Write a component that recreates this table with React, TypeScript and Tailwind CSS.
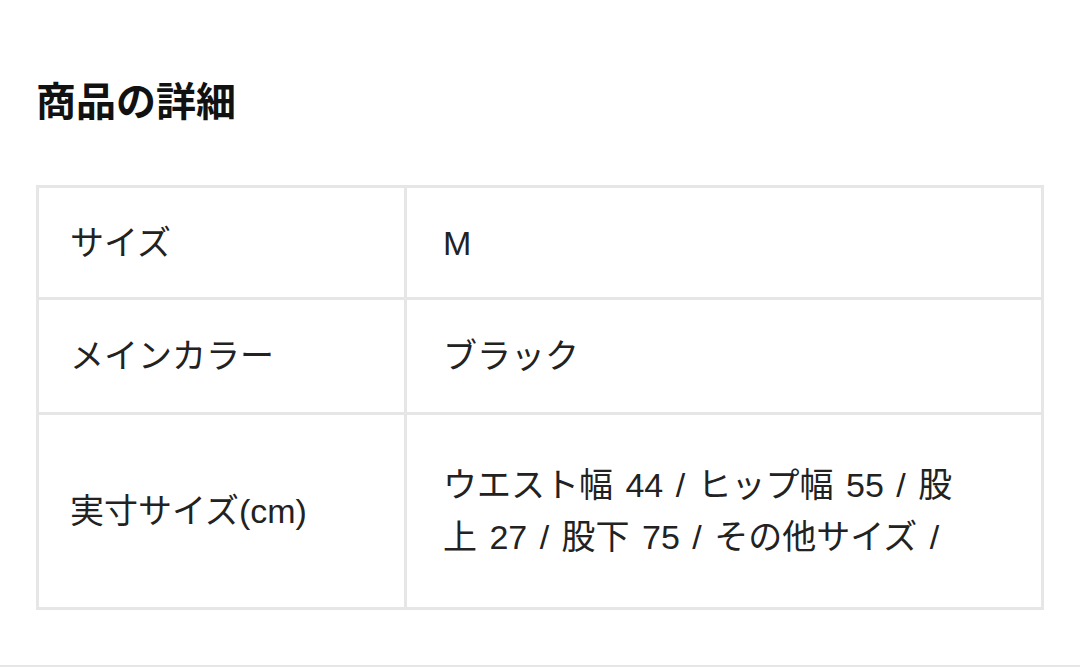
const rows = [
  { label: "サイズ", value: "M", h: "h-[109px]" },
  { label: "メインカラー", value: "ブラック", h: "h-[115px]" },
  {
    label: "実寸サイズ(cm)",
    value: "ウエスト幅 44 / ヒップ幅 55 / 股上 27 / 股下 75 / その他サイズ /",
    h: "h-[195px]",
  },
];

export default function App() {
  return (
    <div
      className="flex h-[667px] w-full flex-col bg-white text-[#222]"
      style={{ fontFamily: '"Liberation Sans", "Noto Sans CJK JP", sans-serif' }}
    >
      <div className="flex-1 px-[36px]">
        <h2
          className="mt-[76px] text-[40px] font-bold leading-[46px] text-[#111]"
          style={{ fontFamily: '"Noto Sans CJK JP", sans-serif' }}
        >
          商品の詳細
        </h2>

        <div className="mt-[63px] w-[1008px] border-[3px] border-[#e6e6e6]">
          {rows.map((row, i) => (
            <div
              key={row.label}
              className={`flex ${row.h} ${i > 0 ? "border-t-[3px] border-[#e6e6e6]" : ""}`}
            >
              <div className="flex w-[368px] shrink-0 items-center border-r-[3px] border-[#e6e6e6] pl-[31px] text-[34px] leading-[52px]">
                {row.label}
              </div>
              <div className="flex flex-1 items-center pl-[36px] pr-[56px] text-[34px] leading-[52px] [word-spacing:3px]">
                <span>{row.value}</span>
              </div>
            </div>
          ))}
        </div>
      </div>
      <div className="h-[2px] w-full bg-[#e6e6e6]" />
    </div>
  );
}
